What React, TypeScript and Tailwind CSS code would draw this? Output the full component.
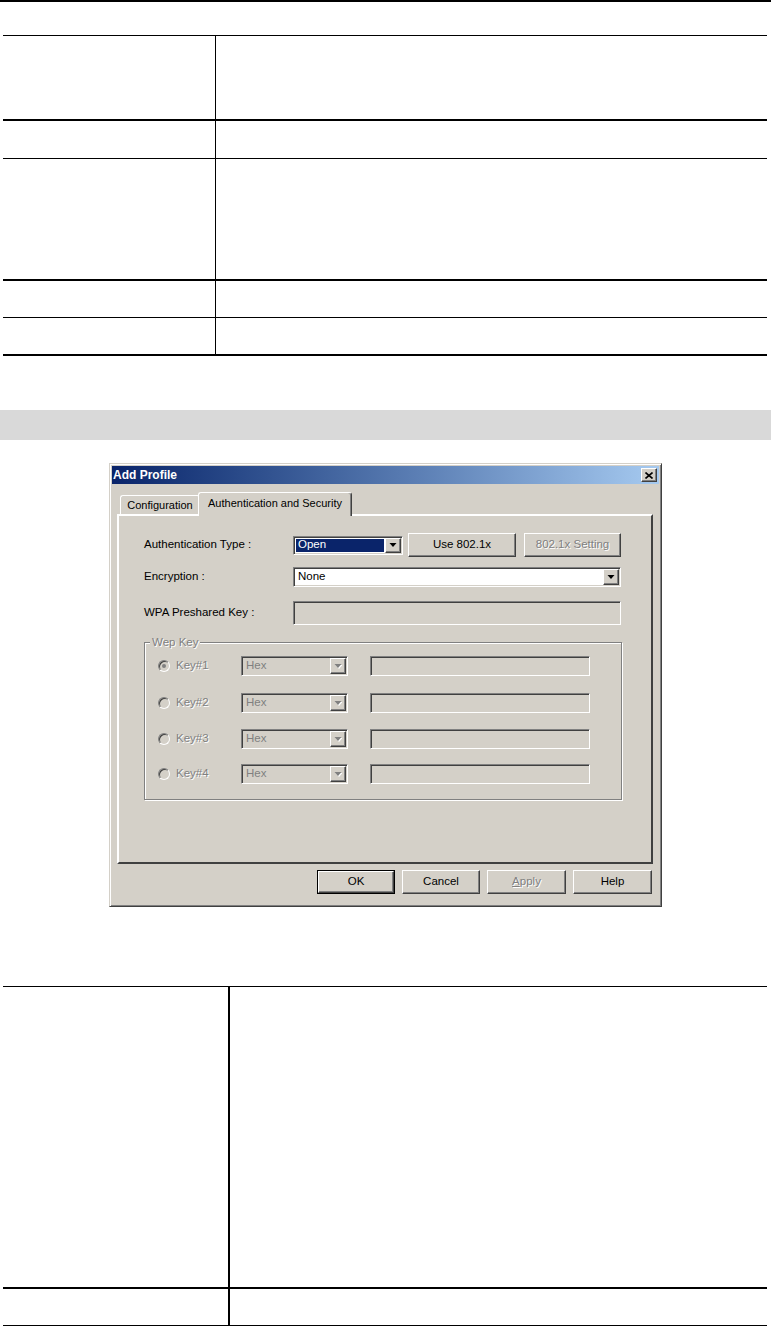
import React from "react"

const raised =
  "border border-t-white border-l-white border-r-[#404040] border-b-[#404040] shadow-[inset_-1px_-1px_0_#808080]"
const sunken =
  "border border-t-[#808080] border-l-[#808080] border-r-white border-b-white shadow-[inset_1px_1px_0_#404040,inset_-1px_-1px_0_#d4d0c8]"
const grayText = "text-[#808080] [text-shadow:1px_1px_0_#ffffff]"

function Arrow({ disabled }: { disabled?: boolean }) {
  return (
    <svg width="8" height="5" viewBox="0 0 8 5">
      {disabled && <polygon points="1.5,1 8.5,1 5,5" fill="#ffffff" />}
      <polygon points="0.5,0 7.5,0 4,4" fill={disabled ? "#808080" : "#000000"} />
    </svg>
  )
}

function Combo({
  className,
  text,
  selected,
  disabled
}: {
  className: string
  text: string
  selected?: boolean
  disabled?: boolean
}) {
  return (
    <div className={`flex p-px ${sunken} ${disabled ? "bg-[#d4d0c8]" : "bg-white"} ${className}`}>
      <div className="flex flex-1 items-stretch p-px">
        <div
          className={`flex flex-1 items-center px-[2px] ${
            selected ? "bg-[#0a246a] text-white" : disabled ? "text-[#808080]" : "text-black"
          }`}
        >
          {text}
        </div>
      </div>
      <div className={`flex w-4 items-center justify-center bg-[#d4d0c8] ${raised}`}>
        <Arrow disabled={disabled} />
      </div>
    </div>
  )
}

function WinButton({
  className,
  children,
  disabled
}: {
  className: string
  children: React.ReactNode
  disabled?: boolean
}) {
  return (
    <div
      className={`flex items-center justify-center bg-[#d4d0c8] ${raised} ${
        disabled ? grayText : "text-black"
      } ${className}`}
    >
      {children}
    </div>
  )
}

function Radio({ checked }: { checked?: boolean }) {
  return (
    <div className="flex h-3 w-3 items-center justify-center rounded-full border border-t-[#808080] border-l-[#808080] border-r-white border-b-white bg-[#d4d0c8] shadow-[inset_1px_1px_0_#404040]">
      {checked && <div className="h-1 w-1 rounded-full bg-[#808080]" />}
    </div>
  )
}

function KeyRow({ n, checked, className }: { n: number; checked?: boolean; className?: string }) {
  return (
    <div className={`flex h-5 items-center ${className ?? ""}`}>
      <div className="flex w-[83px] items-center">
        <Radio checked={checked} />
        <span className={`ml-[6px] ${grayText}`}>Key#{n}</span>
      </div>
      <Combo className="h-5 w-[107px]" text="Hex" disabled />
      <div className={`ml-[22px] h-5 w-[220px] bg-[#d4d0c8] ${sunken}`} />
    </div>
  )
}

function AddProfileDialog() {
  return (
    <div className="mx-auto mt-[23px] flex h-[444px] w-[553px] flex-col border border-t-[#d4d0c8] border-l-[#d4d0c8] border-r-[#404040] border-b-[#404040] bg-[#d4d0c8] p-[2px] text-[11.5px] leading-none shadow-[inset_1px_1px_0_#ffffff,inset_-1px_-1px_0_#808080]">
      <div className="flex h-[18px] items-center justify-between bg-linear-to-r from-[#0a246a] to-[#a6caf0] pl-[1px] pr-[2px]">
        <span className="text-[12px] font-bold text-white">Add Profile</span>
        <div className={`flex h-[14px] w-4 items-center justify-center bg-[#d4d0c8] ${raised}`}>
          <svg width="8" height="7" viewBox="0 0 8 7">
            <path d="M0.5 0.5 L7.5 6.5 M7.5 0.5 L0.5 6.5" stroke="#000" strokeWidth="1.6" />
          </svg>
        </div>
      </div>

      <div className="ml-[5px] mt-[8px] w-[536px]">
        <div className="flex h-[22px] items-end pl-[3px]">
          <div className="flex h-[19px] w-[80px] items-center justify-center rounded-t-[3px] border-t border-l border-r border-t-white border-l-white border-r-[#404040] text-[11px]">
            Configuration
          </div>
          <div className="relative z-10 -mb-[2px] -ml-[2px] flex h-[24px] w-[154px] items-start justify-center rounded-t-[3px] border-t border-l border-r border-t-white border-l-white border-r-[#404040] bg-[#d4d0c8] pt-[5px] text-[11px] shadow-[inset_-1px_0_0_#808080]">
            Authentication and Security
          </div>
        </div>

        <div className="h-[350px] border-2 border-t-white border-l-white border-r-[#404040] border-b-[#404040] pl-[25px] pt-[17px]">
          <div className="flex h-6 items-center">
            <span className="w-[149px]">Authentication Type :</span>
            <Combo className="h-[19px] w-[110px]" text="Open" selected />
            <WinButton className="ml-[5px] h-6 w-[108px]">Use 802.1x</WinButton>
            <WinButton className="ml-[8px] h-6 w-[97px]" disabled>
              802.1x Setting
            </WinButton>
          </div>

          <div className="mt-[10px] flex h-5 items-center">
            <span className="w-[149px]">Encryption :</span>
            <Combo className="h-5 w-[328px]" text="None" />
          </div>

          <div className="mt-[14px] flex h-6 items-center">
            <span className="w-[149px]">WPA Preshared Key :</span>
            <div className={`h-6 w-[328px] bg-[#d4d0c8] ${sunken}`} />
          </div>

          <div className="relative mt-[17px] h-[158px] w-[478px] border border-[#808080] pl-[13px] pt-[13px] shadow-[inset_1px_1px_0_#ffffff,1px_1px_0_#ffffff]">
            <span className={`absolute -top-[6px] left-[5px] bg-[#d4d0c8] px-[2px] ${grayText}`}>Wep Key</span>
            <KeyRow n={1} checked />
            <KeyRow n={2} className="mt-[17px]" />
            <KeyRow n={3} className="mt-[16px]" />
            <KeyRow n={4} className="mt-[15px]" />
          </div>
        </div>
      </div>

      <div className="mr-[7px] mt-[6px] flex justify-end gap-[7px]">
        <div className="h-6 w-[78px] border border-black">
          <WinButton className="h-full w-full">OK</WinButton>
        </div>
        <WinButton className="h-6 w-[78px]">Cancel</WinButton>
        <WinButton className="h-6 w-[79px]" disabled>
          <span className="underline">A</span>pply
        </WinButton>
        <WinButton className="h-6 w-[79px]">Help</WinButton>
      </div>
    </div>
  )
}

export default function App() {
  return (
    <div className="min-h-[1326px] w-[771px] bg-white font-['Liberation_Sans',Arial,sans-serif]">
      <div className="h-[2px] bg-black" />

      <div className="ml-[3px] mt-[33px] w-[764px] border-t border-black">
        <div className="flex h-[85px] border-b-2 border-black">
          <div className="w-[213px] border-r border-black" />
        </div>
        <div className="flex h-[38px] border-b border-black">
          <div className="w-[213px] border-r border-black" />
        </div>
        <div className="flex h-[122px] border-b-2 border-black">
          <div className="w-[213px] border-r border-black" />
        </div>
        <div className="flex h-[37px] border-b border-black">
          <div className="w-[213px] border-r border-black" />
        </div>
        <div className="flex h-[38px] border-b-2 border-black">
          <div className="w-[213px] border-r border-black" />
        </div>
      </div>

      <div className="mt-[54px] h-[30px] bg-[#d9d9d9]" />

      <AddProfileDialog />

      <div className="ml-[3px] mt-[79px] w-[764px] border-t border-black">
        <div className="flex h-[302px] border-b-2 border-black">
          <div className="w-[227px] border-r-2 border-black" />
        </div>
        <div className="flex h-[37px] border-b border-black">
          <div className="w-[227px] border-r-2 border-black" />
        </div>
      </div>
    </div>
  )
}
